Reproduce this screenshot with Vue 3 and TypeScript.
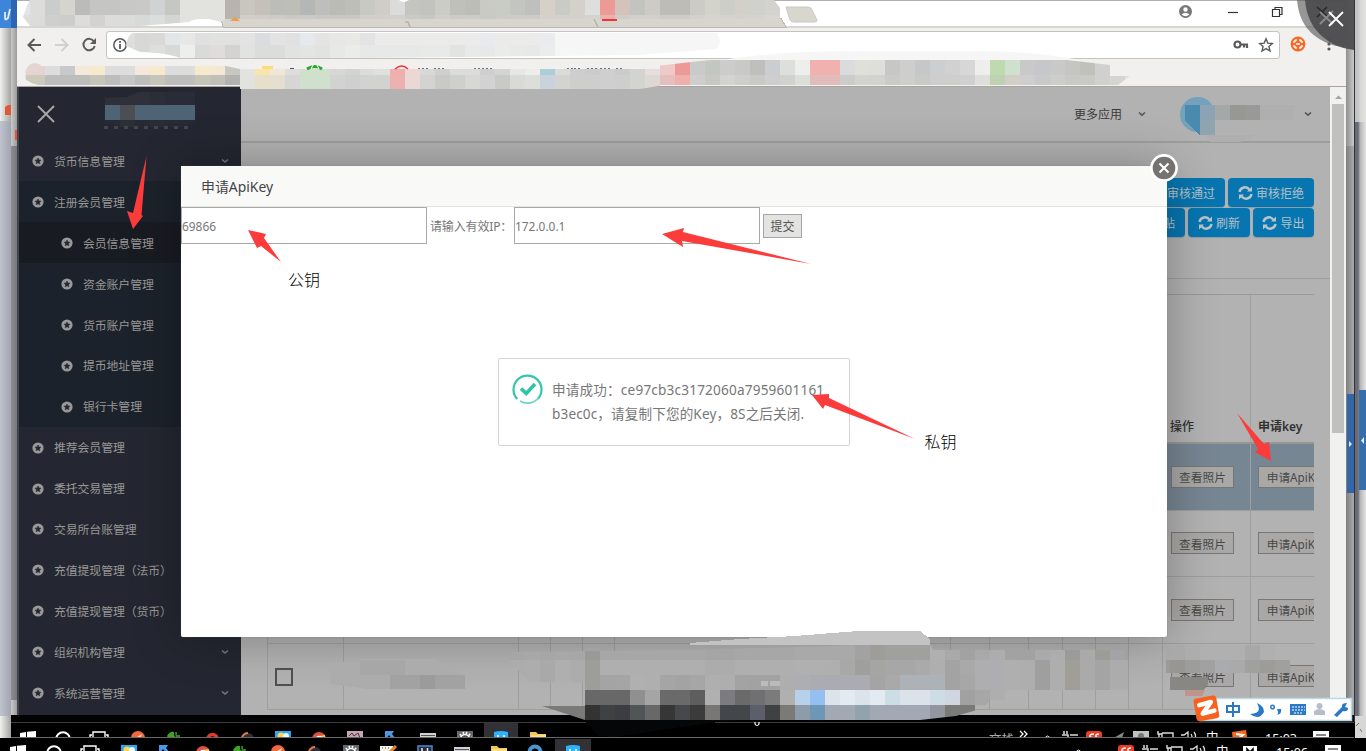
<script setup lang="ts">
interface MenuItem { label: string; sub?: boolean; active?: boolean; dark?: boolean; arrow?: boolean }
const menu: MenuItem[] = [
  { label: '货币信息管理', arrow: true },
  { label: '注册会员管理', dark: true },
  { label: '会员信息管理', dark: true, sub: true, active: true },
  { label: '资金账户管理', dark: true, sub: true },
  { label: '货币账户管理', dark: true, sub: true },
  { label: '提币地址管理', dark: true, sub: true },
  { label: '银行卡管理', dark: true, sub: true },
  { label: '推荐会员管理' },
  { label: '委托交易管理' },
  { label: '交易所台账管理' },
  { label: '充值提现管理（法币）' },
  { label: '充值提现管理（货币）' },
  { label: '组织机构管理', arrow: true },
  { label: '系统运营管理', arrow: true },
]
const rows = [0, 1, 2, 3]

interface Strip { x: number; y: number; h: number; c: string }
interface Cell { x: number; y: number; h: number; fill: string }
const cells = (strips: Strip[]): Cell[] =>
  strips.flatMap((s) =>
    s.c.split(' ').map((c, i) => ({ x: s.x + i * 15, y: s.y, h: s.h, fill: c === '-' ? 'none' : '#' + c })),
  )

const tabMosaic = cells([
  { x: 15, y: 0, h: 15, c: 'e2e6ea dcdddb cbcccc d5d4cd bbbbba c5c5c4 c5c5c4 c8c8c7 c9c9c7 d0d2d3 c4c7c2 e2e2df e2e2df e2e2df b8b3ab c8c6bf c5c1ba bcbcb9 bebeb9 b5b6b6 bebebb bbbbb6 bebeb9 c9c9c3 cfcdc8 dbdbd9 c5c5bf c2c2bf ccccc7 c0c0bb bdbdb8 c9cac4 c9cbc5 c3c6c0 bfbfbe d6d0c9 c9cbc5 d4d0ca dededd ed9a97 d4c3ba c2c5bf cccbc5 bdbcb7 bdbcb7 cccbc6 d3d2cb cecec8 d4cfc8 d0d1cc d5d3cd' },
  { x: 15, y: 15, h: 13, c: 'dededd dcdcda cfcfce cdcdca dcdcdb d3d2cf dcdcdb dcdcdb d8d9d9 dcdedd d5d6d3 e2e2df e2e2df e2e2df b9b5ae d1cfc9 d1cdc6 cccbc7 c9c8c2 c9c9c7 c8c7c2 c8c7c2 c8c7c2 d2cfc8 d2cfc8 d0d0cd c9cac4 c5c8c2 d1cdc8 cbcac5 ccccc7 c7c9c5 cccbc5 cdcdc6 cccbc7 d4d2cb d2d1cb d4d0ca d4d4cf e8b4b1 d0cdc6 d0d1ca d1d0ca cdccc5 cdccc5 d2d1cb d5d4cd d4d3cd d3d2cb d5d3cd d7d6d0' },
])
const urlMosaic = cells([
  { x: 120, y: 32, h: 13, c: 'dededd d8d8d7 d9d9d8 e3e6e9 e6e7e6 e0e0e0 e1e1e0 e1e1e0 e3e3e3 dbdcdf e3e3e3 e1e1e1 e5e8ec e4e4e4 e7e7e6 e8e8e7 e3e3e3 ebebeb ebebea ebebea ebebea ebebea ebebea ebebeb e8ebed ebebea ebebea ebebea e9ebee f6f6f6 f6f6f6 f6f6f6 f6f6f6 f6f6f6 f6f6f6 f6f6f6 f6f6f6 f6f6f6 f6f6f6 f6f6f6' },
  { x: 120, y: 45, h: 13, c: 'dededd d8d8d7 dededd d8d8d7 eeeeed dadad9 e0dcdb d3d3d2 e2e2e1 dcdcdb dcdcdb e2e2e1 e4e4e3 e2e2e0 e8e8e7 ebebea e8e8e8 e8e8e8 e8e8e8 e8e8e8 e9e9e8 e9e9e9 e3e4e0 e9e9e9 e8e8e8 ebebea e9e9e8 e8e8e8 ebeceb f6f6f6 f6f6f6 f6f6f6 f6f6f6 f6f6f6 f6f6f6 f6f6f6 f6f6f6 f6f6f6 f6f6f6 f6f6f6' },
])
const markMosaic = cells([
  { x: 15, y: 60, h: 15, c: 'e3dedb e4d5d2 dcdddc c7c9ca f5e9da f5eacb dcdddc dcdddc f5e8da f5eacb dcdddc dcdddc f5eacb f5e8d3 c8c8c2 e2e2df f8e5ac f2e6d9 dcdddc cfe0cc cfe0cc d7d7d7 d3d3d2 dcdcdb e0e1dd f0afac edd6d3 d8d8d7 cfcfce dcdddb dcdcdb cfcfcf d4d4d3 e6e6e5 edeeec adcdd7 dbdbda cdcecd cacbca cecfce cacbcb d3d3d2 e7dddc efc9c7 ec9997 c9cbc8 c4c6c0 cbcccb c9c9c6 bfbfbe cbcdd0 dddfda eeeeed f0b1af f0b1af dadbdd dfe0da dedfda c7c7c6 cececf c6c7c7 cdcecf d1d1d1 d7d7d7 efeeed bfdab1 cfe0cc c9c9c9 c5c7ca c9cac8 c5c5c1 c0c1bb d0d0cf d7d7d6 dedfda' },
  { x: 15, y: 75, h: 14, c: 'ccc8bb ccc8bb bdbdbc bdbdbc bdbdbc c7c5ba bdbdbc c5c6c7 bdbdbc c7c5ba bdbdbc bdbdbc c6c3b8 c1bfb7 b2b2b1 e2e2df e6dfc9 e6dece d6d6d5 cfe0cc cfe0cc d2d2d1 cfcfcf d2d2d1 d2d2d1 edb2af ebd7d5 d3d3d2 c9c9c8 cfcfce d7d7d6 d2d2d2 c9c9c8 d9dad8 dcdeda cad2db d3d3d1 cececd cececd cfcfcf cececd d3d3d2 ddd8d4 e4bfbd efafad cececd c7c8c4 d3d3d2 cececd c9c9c8 cececf d1d1cf dcded8 e1bcba e1bcba ccccca d3d3d2 d2d2d1 cacac9 cececd c9c9c8 cecece cececd cfd0cf dedfda bed1b2 d3cec8 cecece c9c9c9 cdcdcc c9c9c8 c9c9c7 d0d0cf d4d4d3 dedfda' },
])
const footMosaic = cells([
  { x: 510, y: 645, h: 15, c: 'a6a6a6 a8a8a8 a6a6a6 a8a8a8 a7a7a7 999997 a7a7a7 a7a7a7 a7a7a7 a7a7a7 a7a7a7 a7a7a7 a7a7a7 a5a5a5 a5a5a5 a7a7a7 a7a7a7 a7a7a7 a7a7a7 a9a9a9 a9a9a9 a9a9a9 a9a9a9 a2a2a2 9e9d9a a0a09f a0a09f a0a09f b0b0b0 a9a9a9 a2a2a2 a9a9a9 adadad a3a2a1 a2a2a2 a9aaac adadad 9b9b99 aaaaaa 9c9c98 a4a4a8 a1a1a0' },
  { x: 510, y: 660, h: 15, c: 'acacac adadad a9a9a9 afafaf acacac 9d9d9c afafaf afafaf afafaf afafaf afafaf afafaf afafaf acacac acacac afafaf afafaf afafaf afafaf b0b0b0 b0b0b0 afafaf a8a8a8 9f9f9e a5a5a4 a7a7a7 a7a7a7 aaaaaa afafaf a3a3a3 a9a9a9 aeaeb0 aeaeb2 afafaf aeaeae 9f9f9d aeaeae 9f9f98 aaaaaa a4a4a4 acacac acacac' },
  { x: 510, y: 675, h: 15, c: 'adadad adadad a9a9a9 afafaf acacac 9d9d9c a4a4a4 a5a5a5 b0b0b0 afafaf a5a5a5 a3a3a3 a6a6a6 afafaf aeaeae a3a3a3 a2a2a2 a2a2a2 aeaeae acaeb2 aaacb2 aaacb2 aaacb2 aaacb2 a4a4a4 a9a9a9 adb1b8 adb1b8 adb1b8 a3a3a3 a7a7a7 aeaeae aeaeb2 afafaf aeaeae 9f9f9f aeaeae 9f9f98 aaaaaa a4a4a4 acacac acacac' },
  { x: 585, y: 690, h: 15, c: '686868 686868 686868 909090 a5a5a5 6a6a6a 6a6a6a 5e5e5f b0b0b0 7b7b80 6a6a6a 707072 7b7b7b b0b0b0 b6d1e9 93bff1 dde3ea e4eaf1 dde3ea e4eaf1 cddde5 dce2e9 dce2e9 cddde5 cfd6e0 a1a1a1 a7a7a7 aeaeae' },
  { x: 540, y: 705, h: 15, c: '7a7a79 7a7a79 7a7a79 333333 3f4144 3b3d42 525558 686868 363636 46484c 3b3b3b 787774 43464a 43464a 5b5f6c 3f4143 7b7a77 8d9baa 6e96b6 a2a9b3 a2a9b3 91a4ae a2a9b4 a2a9b4 a2a9b4 a2a9b4 93969f 7a7a79 7a7a79' },
])
const cornerMosaic = cells([
  { x: 1125, y: 645, h: 15, c: 'a9a9a8 a9a9a8 a8a8a6 a9a9a9 adadad b0b0b0 b0b0b0 b0b0b0 a8a8a8 b0b0b0' },
  { x: 1125, y: 660, h: 13, c: 'a6a6a6 a9a9a9 9b9a97 979692 9d9d9b a1a1a2 aaabaf aaaaaa a0a09f 9d9c99 a0a09f' },
])
const logoMosaic = cells([
  { x: 105, y: 92, h: 13, c: '2f3038 2f3038 2f303a 2b2e38 292c37 292c37' },
  { x: 105, y: 105, h: 15, c: '4e6475 4d4e53 4e6475 4e6475 4e6475 4e6475' },
  { x: 105, y: 120, h: 8, c: '262a33 2d2f37 262a33 292c35 262a33 262a33' },
])

interface Icon { k: string; x: number }
const bar1: Icon[] = [
  { k: 'win', x: 20 }, { k: 'ring', x: 55 }, { k: 'view', x: 89 }, { k: 'orange', x: 130 }, { k: 'green', x: 166 }, { k: 'red', x: 204 },
  { k: 'fox', x: 240 }, { k: 'sun', x: 275 }, { k: 'chrome', x: 311 }, { k: 'pink', x: 347 }, { k: 'arrow', x: 384 }, { k: 'box', x: 420 },
  { k: 'gear', x: 457 }, { k: 'blue', x: 493 }, { k: 'folder', x: 530 }, { k: 'plug', x: 1062 }, { k: 's', x: 1086 }, { k: 'plane', x: 1110 },
  { k: 'grey', x: 1133 }, { k: 'mon', x: 1157 }, { k: 'vol', x: 1181 }, { k: 'tile', x: 1232 }, { k: 'note', x: 1313 },
]
const bar2: Icon[] = [
  { k: 'win', x: 10 }, { k: 'ring', x: 46 }, { k: 'view', x: 80 }, { k: 'sun', x: 121 }, { k: 'arrow', x: 158 }, { k: 'chrome', x: 195 },
  { k: 'green', x: 232 }, { k: 'orange', x: 270 }, { k: 'fox', x: 307 }, { k: 'gear', x: 343 }, { k: 'pad', x: 380 }, { k: 'ui', x: 417 },
  { k: 'box', x: 454 }, { k: 'folder', x: 491 }, { k: 'swirl', x: 527 }, { k: 'blue', x: 565 }, { k: 's', x: 1118 }, { k: 'plug', x: 1142 },
  { k: 'mon', x: 1166 }, { k: 'vol', x: 1190 }, { k: 'm', x: 1243 }, { k: 'note', x: 1325 },
]
const bars = [
  { cls: 'first', icons: bar1, zh: 1206, time: '15:03', tx: 1265, hi: 484, hw: 34, caret: 1047 },
  { cls: 'second', icons: bar2, zh: 1216, time: '15:06', tx: 1276, hi: 555, hw: 36, caret: 1078 },
]
</script>

<template>
  <div class="desktop">
    <div class="edge left-outer"></div>
    <div class="edge left-inner"></div>
    <div class="edge right-inner"></div>
    <div class="edge right-outer"></div>

    <section class="browser">
      <div class="tabs"></div>
      <div class="toolbar">
        <svg class="nav" width="90" height="32" viewBox="0 0 90 32" fill="none" stroke-width="2">
          <path d="M24 16H12M17.500 10l-6 6 6 6" stroke="#5a5a5a" />
          <path d="M38 16h12M44.500 10l6 6-6 6" stroke="#d2d0cb" />
          <path d="M77 12.500A5.700 5.700 0 1 0 77.700 17" stroke="#5a5a5a" />
          <path d="M79 9v6h-6z" fill="#5a5a5a" />
        </svg>
        <div class="url">
          <svg width="16" height="16" viewBox="0 0 16 16"><circle cx="8" cy="8" r="6.200" fill="none" stroke="#5a5a5a" stroke-width="1.500" /><path d="M8 7v5M8 4v1.700" stroke="#5a5a5a" stroke-width="1.800" /></svg>
          <span class="grow"></span>
          <svg width="16" height="16" viewBox="0 0 16 16"><circle cx="4.500" cy="7.500" r="3" fill="none" stroke="#5a5a5a" stroke-width="2.200" /><path d="M7 7.500h8M11 8v2.500M14 8v3" stroke="#5a5a5a" stroke-width="2.200" /></svg>
          <svg class="star" width="16" height="16" viewBox="0 0 16 16"><path d="M8 1.800l1.800 4.300 4.600.4-3.500 3 1.100 4.500L8 11.600 4 14l1.100-4.500-3.500-3 4.600-.4z" fill="none" stroke="#5a5a5a" stroke-width="1.400" /></svg>
        </div>
        <svg class="ext" width="16" height="16" viewBox="0 0 16 16"><circle cx="8" cy="8" r="7.400" fill="#fb6421" /><path d="M4 6l2-2M10 4l2 2M4 10l2 2M10 12l2-2M7 8h2" stroke="#ffe6d8" stroke-width="2.200" stroke-linecap="round" /></svg>
        <svg class="dots" width="4" height="16" viewBox="0 0 4 16" fill="#5a5a5a"><circle cx="2" cy="3" r="1.600" /><circle cx="2" cy="8" r="1.600" /><circle cx="2" cy="13" r="1.600" /></svg>
      </div>
      <div class="bookmarks"></div>
      <div class="page">
        <aside class="sidebar">
          <div class="brand">
            <svg width="18" height="18" viewBox="0 0 18 18"><path d="M1 1l16 16M17 1L1 17" stroke="#aaa9a7" stroke-width="1.800" /></svg>
          </div>
          <div v-for="m in menu" :key="m.label" class="item" :class="{ dark: m.dark, sub: m.sub, active: m.active }">
            <svg class="bullet" width="12" height="12" viewBox="0 0 12 12"><circle cx="6" cy="6" r="5.600" fill="#999" /><path d="M6 3l1 1.900 2 .3-1.500 1.500.4 2.100-1.900-1-1.900 1 .4-2.100L3 5.200l2-.3z" fill="#242731" stroke="#242731" stroke-width=".5" /></svg>
            <span>{{ m.label }}</span>
            <svg v-if="m.arrow" class="chev" width="8" height="6" viewBox="0 0 8 6"><path d="M1 1.500l3 2.600 3-2.600" fill="none" stroke="#777980" stroke-width="1.500" /></svg>
          </div>
        </aside>
        <main class="main">
          <header class="topbar">
            <span>更多应用</span>
            <svg width="8" height="6" viewBox="0 0 8 6"><path d="M1 1.500l3 2.600 3-2.600" fill="none" stroke="#555" stroke-width="1.600" /></svg>
            <i class="avatar"></i>
            <svg class="last" width="8" height="6" viewBox="0 0 8 6"><path d="M1 1.500l3 2.600 3-2.600" fill="none" stroke="#555" stroke-width="1.600" /></svg>
          </header>
          <div class="actions">
            <div class="btns">
              <span v-for="b in [['审核通过', 'w1'], ['审核拒绝', 'w2']]" :key="b[0]" class="btn" :class="b[1]">
                <svg width="15" height="14" viewBox="0 0 15 14" fill="none" stroke="#bac4c9" stroke-width="2.400"><path d="M1.500 6A5.500 5.500 0 0 1 11.500 3.800M13.500 8A5.500 5.500 0 0 1 3.500 10.200" /><path d="M14 .6v5H9zM1 13.400v-5h5z" fill="#bac4c9" stroke="none" /></svg>{{ b[0] }}</span>
            </div>
            <div class="btns">
              <span v-for="b in [['粘贴', 'w3'], ['刷新', 'w4'], ['导出', 'w5']]" :key="b[0]" class="btn" :class="b[1]">
                <svg width="15" height="14" viewBox="0 0 15 14" fill="none" stroke="#bac4c9" stroke-width="2.400"><path d="M1.500 6A5.500 5.500 0 0 1 11.500 3.800M13.500 8A5.500 5.500 0 0 1 3.500 10.200" /><path d="M14 .6v5H9zM1 13.400v-5h5z" fill="#bac4c9" stroke="none" /></svg>{{ b[0] }}</span>
            </div>
          </div>
          <div class="grid">
            <div class="tr head"><i v-for="n in 12" :key="n"></i><b class="act">操作</b><b class="key">申请key</b></div>
            <div v-for="r in rows" :key="r" class="tr" :class="{ sel: r === 0 }">
              <div class="check"><span v-if="r === 3"></span></div>
              <i v-for="n in 11" :key="n"></i>
              <div class="act"><span class="mini">查看照片</span></div>
              <div class="key"><span class="mini wide">申请ApiKey</span></div>
            </div>
          </div>
        </main>
        <div class="scroll"><svg width="13" height="14" viewBox="0 0 13 14"><path d="M3 9l3.500-3.500L10 9z" fill="#a3a3a3" /></svg><div class="thumb"></div></div>
      </div>
    </section>

    <section class="modal">
      <h3>申请ApiKey</h3>
      <div class="form"><div class="field f1">69866</div><label>请输入有效IP：</label><div class="field f2">172.0.0.1</div><span class="submit">提交</span></div>
      <div class="notice">
        <svg width="32" height="32" viewBox="0 0 32 32" fill="none"><path d="M5.200 25A14 14 0 1 1 26 24.800" stroke="#35c5ab" stroke-width="2.200" /><path d="M8 27a14 14 0 0 0 18-2.500" stroke="#69d7c4" stroke-width="1.800" /><path d="M9 14.500l5.300 5L23 10" stroke="#2cc5a7" stroke-width="3.600" /></svg>
        <p><span class="l1">申请成功：ce97cb3c3172060a7959601161</span><br /><span class="l2">b3ec0c，请复制下您的Key，8S之后关闭.</span></p>
      </div>
      <svg class="shut" width="30" height="30" viewBox="0 0 30 30"><circle cx="15" cy="15" r="12.600" fill="#747371" stroke="#fff" stroke-width="2.600" /><path d="M10.500 10.500l9 9M19.500 10.500l-9 9" stroke="#fff" stroke-width="2" /></svg>
    </section>

    <div v-for="b in bars" :key="b.cls" class="taskbar" :class="b.cls">
      <svg width="1366" height="24" viewBox="0 0 1366 24">
        <rect :x="b.hi" y="-8" :width="b.hw" height="32" fill="#323236" />
        <g v-for="i in b.icons" :key="i.k" :transform="`translate(${i.x} 0)`">
          <path v-if="i.k === 'win'" d="M0 2l6-1v7H0zM7 .8L16 0v8H7z" fill="#fff" />
          <circle v-else-if="i.k === 'ring'" cx="8" cy="8" r="6.800" fill="none" stroke="#fff" stroke-width="2" />
          <path v-else-if="i.k === 'view'" d="M4 10V1h12v9M1 10V4h2M19 10V4h-2" fill="none" stroke="#fff" stroke-width="1.400" />
          <g v-else-if="i.k === 'orange'"><circle cx="8" cy="7" r="7" fill="#f4673a" /><path d="M7 6l5-3-2 6z" fill="#ffd0b9" /></g>
          <g v-else-if="i.k === 'green'"><path d="M1 5q3-5 7-4v3l2 4H3z" fill="#3ca51f" /><path d="M9 1h2v3h3v5h-4z" fill="#317e24" /></g>
          <path v-else-if="i.k === 'red'" d="M4 8a4.500 4.500 0 1 1 9 0" fill="none" stroke="#e53a2a" stroke-width="3.500" />
          <g v-else-if="i.k === 'fox'"><circle cx="8" cy="8" r="6" fill="#302d38" /><path d="M2 9a6 6 0 0 1 6-7" fill="none" stroke="#e27a4b" stroke-width="2" /></g>
          <g v-else-if="i.k === 'sun'"><path d="M0 0h16v10H0z" fill="#2ba5f5" /><circle cx="6" cy="5" r="3.500" fill="#ffd34d" /><circle cx="11" cy="5" r="3" fill="#e9f7ff" /></g>
          <g v-else-if="i.k === 'chrome'"><circle cx="8" cy="8" r="7" fill="#de5041" /><path d="M8 5l6-1v5H8z" fill="#f9c84a" /><circle cx="8" cy="8" r="3.300" fill="#dff" /></g>
          <g v-else-if="i.k === 'pink'"><path d="M0 0h16v10H0z" fill="#c6a6b3" /><path d="M2 5l3-3 2 3 4-3 2 5" fill="none" stroke="#45353c" /></g>
          <path v-else-if="i.k === 'arrow'" d="M1 0h9L8 3l4 5H8L5 4 3 7H1z" fill="#4b98e6" />
          <g v-else-if="i.k === 'box'"><path d="M0 2h16v8H0z" fill="#d0d2d7" /><path d="M1 4h14v1H1z" fill="#555" /></g>
          <g v-else-if="i.k === 'gear'"><path d="M0 0h16v12H0z" fill="#67696e" /><circle cx="8" cy="8" r="4.500" fill="#4e4f53" stroke="#fff" stroke-width="1.500" /><circle cx="8" cy="8" r="6.200" fill="none" stroke="#fff" stroke-width="2" stroke-dasharray="1.600 1.650" /></g>
          <g v-else-if="i.k === 'blue'"><path d="M1 1q7-2 14 0v10H1z" fill="#2fb2fd" /><path d="M5 4v3M11 4v3" stroke="#fff" stroke-width="1.500" /></g>
          <g v-else-if="i.k === 'folder'"><path d="M0 1h6l2 2h8v8H0z" fill="#f7c653" /><path d="M1 4h15v5H1z" fill="#ffdf83" /></g>
          <g v-else-if="i.k === 's'"><rect width="16" height="14" rx="3" fill="#f03b25" /><path d="M8 3q-5 0-4 3l4 1M13 3q-4 0-3 3l3 1" fill="none" stroke="#fff" stroke-width="1.400" /></g>
          <path v-else-if="i.k === 'plug'" d="M2 0v3M5 0v3M0 4h6v6M8 4h8" stroke="#ddd" stroke-width="1.500" fill="none" />
          <path v-else-if="i.k === 'plane'" d="M2 8l12-7-3 9z" fill="#888" />
          <g v-else-if="i.k === 'grey'"><path d="M0 0h16v10H0z" fill="#bfc2c3" /><circle cx="8" cy="5" r="3" fill="#777" /></g>
          <path v-else-if="i.k === 'mon'" d="M1 0v3h4M2 3v6M5 2h11v8M5 2v7h11" fill="none" stroke="#ddd" stroke-width="1.400" />
          <path v-else-if="i.k === 'vol'" d="M0 4h3l4-3v9M10 3q2 3 0 6M13 1q3 4 0 8" fill="none" stroke="#ddd" stroke-width="1.300" />
          <g v-else-if="i.k === 'tile'"><path d="M0 1l14-2 2 12H1z" fill="#fa651e" /><path d="M4 3l7 1-5 4 6 1" fill="none" stroke="#fff" stroke-width="2" /></g>
          <g v-else-if="i.k === 'note'"><path d="M0 0h16v12H0z" fill="#fff" /><path d="M3 4h10M3 7h10" stroke="#111" /></g>
          <g v-else-if="i.k === 'pad'"><path d="M0 1h13v10H0z" fill="#f6f4e9" /><path d="M2 3h8" stroke="#444" stroke-dasharray="1 2" /><path d="M10 7l6-6" stroke="#e5862a" stroke-width="3" /></g>
          <g v-else-if="i.k === 'ui'"><path d="M1 1h14v10H1z" fill="#282d3a" stroke="#488bd8" stroke-width="1.500" /><path d="M5 3v5M10.500 3v5M8 6v3" stroke="#eee" stroke-width="1.500" /></g>
          <circle v-else-if="i.k === 'swirl'" cx="8" cy="7" r="5.500" fill="none" stroke="#4a95cf" stroke-width="4" />
          <g v-else><path d="M0 1h14v10H0z" fill="#fff" /><path d="M4 8V4l3 3 3-3v4" fill="none" stroke="#000" stroke-width="1.600" /></g>
        </g>
        <path :d="`M${b.caret - 2.5} 7l3-2 3 2`" stroke="#fff" fill="none" />
        <text :x="b.zh" y="11" class="tt">中</text>
        <text :x="b.tx" y="12" class="tt">{{ b.time }}</text>
        <g v-if="b.cls === 'first'"><text x="989" y="13" class="tt dim">文栈</text><path d="M1020 0l3 3-3 3M1024 0l3 3-3 3" fill="none" stroke="#fff" stroke-width="1.300" /></g>
      </svg>
    </div>

    <svg class="overlay" width="1366" height="751" viewBox="0 0 1366 751">
      <defs>
        <clipPath id="c-tab"><path d="M30 0H774l6 8v10l3 1H225l-4 3-12-3q-14-1-20 3l-48 4H30l-7-9 4-12z" /></clipPath>
        <clipPath id="c-url"><path d="M133 33H717q6 9-1 16l-78 6-270 3H180q-12-5-40-6l-14-6q2-12 7-13z" /></clipPath>
        <clipPath id="c-mark"><path d="M33 64l-8 7 1 9 14 6 185 1 15 2H640l25-4H1118l12-9H1110V65l-34-4-90-9H850l-90 4-60 5-70 8H240l-14-3H42z" /></clipPath>
        <clipPath id="c-foot"><path d="M510 652l180-2 240-7 3 7h195v50H990l-6 8-28 8-36 4H585l-43-14h43v-24H530l-20-20z" /></clipPath>
        <clipPath id="c-corner"><path d="M1166 645l10-4 18-2 10 6h80v15h16l2 6-5 7H1166z" /></clipPath>
        <clipPath id="c-logo"><path d="M105 98l22-1 14-6h54v29l-8 7H120l-15-5z" /></clipPath>
      </defs>
      <g shape-rendering="crispEdges">
        <path d="M221 18H781l5 9H223z" fill="#d7d5ce" stroke="#bab8b2" />
        <g clip-path="url(#c-tab)"><rect v-for="(c, i) in tabMosaic" :key="i" :x="c.x" :y="c.y" width="15" :height="c.h" :fill="c.fill" /></g>
        <path d="M180 0h45v20l-14-2-31 3z" fill="#e2e2df" />
      </g>
      <path d="M405 22h3l2 5M594 19l4 8" fill="none" stroke="#b4b2ad" stroke-width="1.500" />
      <path d="M786 7h22q3 0 4 3l5 10q0 2-3 2h-20q-3 0-4-2z" fill="#d7d6cf" stroke="#c9c8c2" />
      <path d="M602 19h15v2h-15z" fill="#fa3131" />
      <path d="M230 21l5-4 5 4z" fill="#f29a45" />
      <path d="M399 0q4 4 10 0z" fill="#fff" />
      <g shape-rendering="crispEdges"><g clip-path="url(#c-url)"><rect v-for="(c, i) in urlMosaic" :key="i" :x="c.x" :y="c.y" width="15" :height="c.h" :fill="c.fill" /></g></g>
      <path d="M728 59q50-7 110-8h148q50 1 100 10H728z" fill="#f6f6f6" />
      <g shape-rendering="crispEdges"><g clip-path="url(#c-mark)"><rect v-for="(c, i) in markMosaic" :key="i" :x="c.x" :y="c.y < 75 ? (c.x < 240 ? 66 : c.x < 660 ? 69 : 60) : c.y" width="15" :height="c.y < 75 ? (c.x < 240 ? 9 : c.x < 660 ? 6 : 15) : (c.x < 240 || c.x > 655 ? 10 : 14)" :fill="c.fill" /></g></g>
      <circle cx="35" cy="72" r="9" fill="#e4d5d2" /><path d="M26 75h20q-2 9-12 9-6-2-8-9" fill="#cdc9bb" />
      <path d="M262 66h11v3h-11z" fill="#fbdc77" />
      <path d="M307 69q8-5 15 0" fill="none" stroke="#2ba52b" stroke-width="3" /><path d="M313 65l-2 4M317 65l2 4" stroke="#fff" />
      <path d="M395 69q7-6 13 0" fill="none" stroke="#ef3535" stroke-width="1.500" />
      <path d="M418 68.500h12M434 68.500h11M474 68.500h18M567 68.500h6M574 68.500h6M587 68.500h11M600 68.500h10M616 68.500h7" stroke="#66768a" stroke-width="1" stroke-dasharray="2 2" />
      <path d="M290 68.500h4" stroke="#555" />

      <g fill="none" stroke="#333" stroke-width="1.200">
        <path d="M1228 12.500h10" /><path d="M1272.500 9.500h7v7h-7zM1275 9V7.500h7v7h-2" />
      </g>
      <circle cx="1185.500" cy="11.500" r="6.500" fill="#777" /><circle cx="1185.500" cy="9.500" r="2.200" fill="#fff" /><path d="M1181.500 14.500q4-3.500 8 0-4 3.500-8 0" fill="#fff" />
      <path d="M1297 0q2 24 18 36 9 7 21 10h10V0z" fill="#555" opacity=".62" />
      <path d="M1305 0q2 24 18 37 12 11 31 13V0z" fill="#4c4d50" opacity=".94" />
      <path d="M1317 7l11 10M1327 7l-10 10" stroke="#272727" stroke-width="1.500" />
      <path d="M1320 24l13-13M1320 12l13 12" stroke="#898989" stroke-width="2" />
      <path d="M1329 12l14 14M1343 12l-14 14" stroke="#fff" stroke-width="1.800" />

      <g shape-rendering="crispEdges">
        <g clip-path="url(#c-logo)"><rect v-for="(c, i) in logoMosaic" :key="i" :x="c.x" :y="c.y" width="15" :height="c.h" :fill="c.fill" /></g>
      </g>
      <path d="M104 127.500h88" stroke="#42454f" stroke-width="3" stroke-dasharray="4 6" />

      <g shape-rendering="crispEdges">
        <path d="M1185 105h15v30l-15-14z" fill="#4b8aaf" /><path d="M1200 105h15v15h-15z" fill="#8ba3b3" /><path d="M1200 120h15v15h-15z" fill="#8fa4af" />
        <path d="M1215 105h15v15h-15z" fill="#a5a7a8" /><path d="M1230 105h15v15h-15z" fill="#979796" /><path d="M1245 105h15v15h-15z" fill="#999998" /><path d="M1260 105h35l-3 15h-32z" fill="#afafaf" /><path d="M1205 135h50l-15 7h-30z" fill="#afafaf" />
      </g>

      <g shape-rendering="crispEdges">
        <path d="M330 662h30v-3h75l30 16v14h-97l-38-5z" fill="#acacac" />
        <path d="M360 660h45v15h-45z" fill="#a7a7a7" /><path d="M390 675h75v14h-75z" fill="#a2a2a2" /><path d="M420 675h15v14h-15z" fill="#9b9b9b" />
        <path d="M690 643l50-4 55-3 63-5h62l10 8v6H690z" fill="#c3c3c3" />
        <g clip-path="url(#c-foot)"><rect v-for="(c, i) in footMosaic" :key="i" :x="c.x" :y="c.y" width="15" :height="c.h" :fill="c.fill" /></g>
        <g clip-path="url(#c-corner)"><rect v-for="(c, i) in cornerMosaic" :key="i" :x="c.x" :y="c.y" width="15" :height="c.h" :fill="c.fill" /></g>
        <path d="M1170 677h38v7l-4 6h-34z" fill="#898784" /><path d="M1185 690h20l-3 6h-17z" fill="#bd958c" />
        <path d="M585 720h150l-40 5-80 12-15-1-15-14" fill="#050608" />
        <path d="M761 681h7v5h-7zM770 681h10v5h-10z" fill="#bbb" />
      </g>
      <path d="M755 722v2q2 3 4 0v-2" stroke="#fff" fill="none" stroke-width="1.200" />

      <g fill="#fc3b3b">
        <path d="M146.500 156l-5 59 1.500 1-10 13-6-18 6 2z" />
        <path d="M248 230l18 4-2 4 17 24-20-16-4 2z" />
        <path d="M662 234l22-6-1 4 128 32-129-23 1 6z" />
        <path d="M812 395l17-1v4l86 41-90-34-2 4z" />
        <path d="M1237 413l27 31 5-2 2 19-16-9 3-3z" />
      </g>
      <text x="288" y="286" class="ann">公钥</text>
      <text x="924.500" y="447.500" class="ann">私钥</text>

      <rect x="1200.500" y="698.500" width="151" height="22" fill="#fff" stroke="#bad9e4" stroke-width="1.500" />
      <g transform="rotate(-10 1206 709)"><rect x="1195" y="697" width="23" height="23" rx="3" fill="#f8601f" /><path d="M1200 704l12-1-10 10 12-1" fill="none" stroke="#fff" stroke-width="4.500" stroke-linejoin="round" stroke-linecap="round" /></g>
      <g fill="none" stroke="#2a78c7" stroke-width="2"><path d="M1227 706h12v6h-12zM1233 702v15" /></g>
      <path d="M1257 703q6 11-7 11 9 7 14-2 0-6-7-9M1277 709h4q1 5-4 6 2-2 0-6" fill="#2b78c6" />
      <circle cx="1272.500" cy="707" r="1.800" fill="none" stroke="#2b78c6" stroke-width="1.500" />
      <rect x="1290" y="704" width="16" height="11" fill="#2b78c6" /><path d="M1292 707h13M1292 710h13M1294 713h9" stroke="#fff" stroke-dasharray="2 1" />
      <circle cx="1319.500" cy="706" r="3" fill="#b8bdc7" /><path d="M1314 715v-4q5-4 11 0v4z" fill="#b8bdc7" />
      <path d="M1334 715l8-8q-1-4 5-4l-2 4 3 1q0 4-5 3l-6 6z" fill="#2b78c6" />
      <path d="M1347 394h7v99h-7z" fill="#3266a7" /><path d="M1359 390h7v100h-7z" fill="#346ead" />
      <path d="M1349 441l3 3-3 3zM1364 437l-3 3.500 3 3.500z" fill="#e7eff5" />
      <path d="M5 107l3-2h3v10H5zM15 130h2v10h-2z" fill="#df5838" />
      <path d="M5 12v6q0 3 3 0l2-9" stroke="#e2eafa" stroke-width="1.800" fill="none" />
      <path d="M1356 726l3-3M1360 729l2 3" stroke="#777" />
    </svg>
  </div>
</template>

<style>
html, body { overflow: hidden; background: #000; }
</style>
<style scoped>
* { box-sizing: border-box; }
.desktop { position: relative; width: 1366px; height: 751px; overflow: hidden; background: #000; font-family: "Noto Sans", "Noto Sans CJK SC", sans-serif; font-size: 12px; color: #444; }
.edge { position: absolute; top: 0; }
.left-outer { left: 0; width: 11px; height: 738px; background: linear-gradient(to bottom, #3d85d8 28px, transparent 28px), linear-gradient(to bottom, transparent 121px, rgba(160, 166, 186, .6) 121px 716px, transparent 716px), linear-gradient(to right, #f0f0ee, #a4a4a4); }
.left-inner { left: 11px; width: 6px; height: 724px; background: linear-gradient(to bottom, #2c66b3 28px, transparent 28px 146px, rgba(80, 84, 92, .5) 146px 700px, transparent 700px), linear-gradient(to right, #c9c9c8, #9b9b9b); }
.right-inner { left: 1346px; width: 9px; height: 722px; border-right: 1px solid #30333b; background: linear-gradient(to bottom, transparent 146px, rgba(80, 80, 82, .25) 146px), linear-gradient(to right, #8f8f8f, #c9c9c9); }
.right-outer { left: 1355px; width: 11px; height: 738px; background: linear-gradient(to bottom, rgba(226, 226, 224, .75) 0 122px, transparent 122px 716px, #d7d7d5 716px), linear-gradient(to right, #696b75 3px, #8a8b92 4px, #b4b4b5 5px, #e4e4e4); }
.browser { position: absolute; left: 17px; top: 0; width: 1329px; height: 716px; display: flex; flex-direction: column; background: #f1f0ee; }
.tabs { height: 28px; background: #fff; border-bottom: 2px solid #d6d6d5; border-top: 1px solid #b0b0b0; }
.toolbar { height: 32px; display: flex; align-items: center; }
.nav { width: 90px; margin-top: 2px; flex: none; }
.url { width: 1173px; height: 28px; margin-top: 1px; margin-left: -1px; border: 1px solid #c3c3bf; border-radius: 3px; background: #fff; display: flex; align-items: center; padding: 0 5px 0 5px; width: 1174px; }
.grow { flex: 1; }
.star { margin-left: 9px; }
.ext { margin-left: 10px; }
.dots { margin-left: 21px; }
.bookmarks { height: 27px; border-bottom: 1px solid #a8a5a0; }
.page { height: 628px; display: flex; background: #b2b2b2; }
.sidebar { width: 224px; background: #242731; border-left: 2px solid #42454d; color: #989795; overflow: hidden; }
.brand { height: 53.500px; padding: 18px 18px; }
.item { height: 40.900px; display: flex; align-items: center; padding: 0 12px 0 13px; font-size: 11.900px; white-space: nowrap; }
.item span { margin-left: 10px; flex: 1; letter-spacing: -.1px; margin-top: -1px; }
.item .bullet { margin-top: 1px; }
.item.dark { background: #1c222b; }
.item.sub { padding-left: 42px; }
.item.active { background: #191b22; }
.main { width: 1089px; display: flex; flex-direction: column; }
.topbar { height: 56px; border-bottom: 2px solid #9f9e9b; display: flex; align-items: center; padding-left: 833px; color: #3a3a3a; }
.topbar svg { margin-left: 16px; }
.avatar { width: 35px; height: 35px; border-radius: 50%; background: #74a1bc; margin-left: 34px; }
.topbar svg.last { margin-left: 89px; }
.actions { height: 136px; border-bottom: 1px solid #9e9e9b; padding: 35px 16px 0 0; }
.btns { display: flex; justify-content: flex-end; gap: 3px; height: 29px; }
.btns + .btns { margin-top: 1px; }
.btn { height: 29px; border-radius: 4px; background: #0775b0; color: #b5c0c6; display: flex; align-items: center; justify-content: center; gap: 3px; box-shadow: 0 1px 1px #8a9ca7; white-space: nowrap; font-size: 12px; }
.w1, .w2 { width: 86px; }
.w3, .w4 { width: 62px; }
.w5 { width: 61px; }
.grid { margin: 15px 0 0 26px; width: 1047px; border-top: 1px solid #9a9a99; }
.tr { display: grid; grid-template-columns: 76px 175px 32px 32px 32px 336px 39px 39px 34px 33px 33px 34px 88px 64px; height: 66.500px; border-bottom: 1px solid #9e9e9d; }
.tr > * { border-left: 1px solid #a09f9f; overflow: hidden; }
.tr.head { height: 149px; border-bottom: 2px solid #969695; }
.head b { line-height: 16px; font-size: 12px; color: #333; }
.head b.act, .head b.key { padding: 116px 0 0 7px; }
.head .act { font-weight: 500; }
.head .key { font-weight: 600; }
.tr.sel { background: #778693; }
.act, .key { display: flex; align-items: center; padding-left: 8px; }
.mini { flex: none; width: 63px; height: 22px; border: 1px solid #777; background: #a9a8a7; display: flex; justify-content: center; align-items: center; white-space: nowrap; color: #484848; font-size: 11.700px; }
.key { padding-left: 7px; }
.mini.wide { width: 78px; }
.check { display: flex; align-items: center; padding-left: 7px; }
.check span { width: 18px; height: 18px; border: 2px solid #505050; margin-top: 2px; }
.scroll { width: 16px; background: #f1f1ef; padding: 3px 1px 0 2px; display: flex; flex-direction: column; }
.thumb { height: 329px; background: #c0c0be; width: 12px; }
.modal { position: absolute; left: 181px; top: 166px; width: 986px; height: 471px; background: #fff; border-radius: 2px; box-shadow: 0 0 50px rgba(0, 0, 0, .3), 0 0 1px #777; }
h3 { margin: 0; height: 41px; background: #f9f9f8; border-bottom: 1px solid #e4e4e2; padding-left: 20px; line-height: 42px; font-weight: 400; font-size: 13.900px; color: #444; }
.form { display: flex; align-items: center; height: 37px; }
.field { width: 246px; height: 37px; border: 1px solid #a9a9a7; line-height: 36px; color: #777; font-size: 11.900px; }
label { width: 87px; padding-left: 3px; font-size: 12px; white-space: nowrap; color: #777; letter-spacing: -.15px; }
.submit { width: 39px; height: 24px; margin-left: 3px; border: 1px solid #a5a5a5; background: #e3e3e1; display: flex; align-items: center; justify-content: center; color: #555; }
.notice { position: absolute; left: 317px; top: 192px; width: 352px; height: 88px; border: 1px solid #d5d5d3; border-radius: 2px; display: flex; padding: 15px 0 0 13px; }
.notice p { margin: 4px 0 0 8px; line-height: 23.500px; font-size: 13.600px; color: #777; white-space: nowrap; }
.l1 { letter-spacing: .18px; }
.l2 { letter-spacing: .12px; }
.shut { position: absolute; left: 968px; top: -13px; }
.taskbar { position: absolute; overflow: hidden; background: #000; border-top: 1px solid #000; }
.taskbar svg { display: block; overflow: visible; }
.first { left: 11px; top: 715px; width: 1343px; height: 23px; border-bottom: 1px solid #686868; padding-top: 15px; background: linear-gradient(#020305 6px, #3a3a3c 6px 7px, #000 7px); }
.first svg { margin-left: -11px; }
.second { left: 0; top: 738px; width: 1366px; height: 13px; padding-top: 6px; }
.overlay { position: absolute; left: 0; top: 0; }
.tt { fill: #fff; font-size: 12.500px; }
.dim { fill: #aaa; }
.ann { fill: #000; font-family: "Noto Sans CJK SC", sans-serif; font-size: 16px; font-weight: 300; }
</style>
